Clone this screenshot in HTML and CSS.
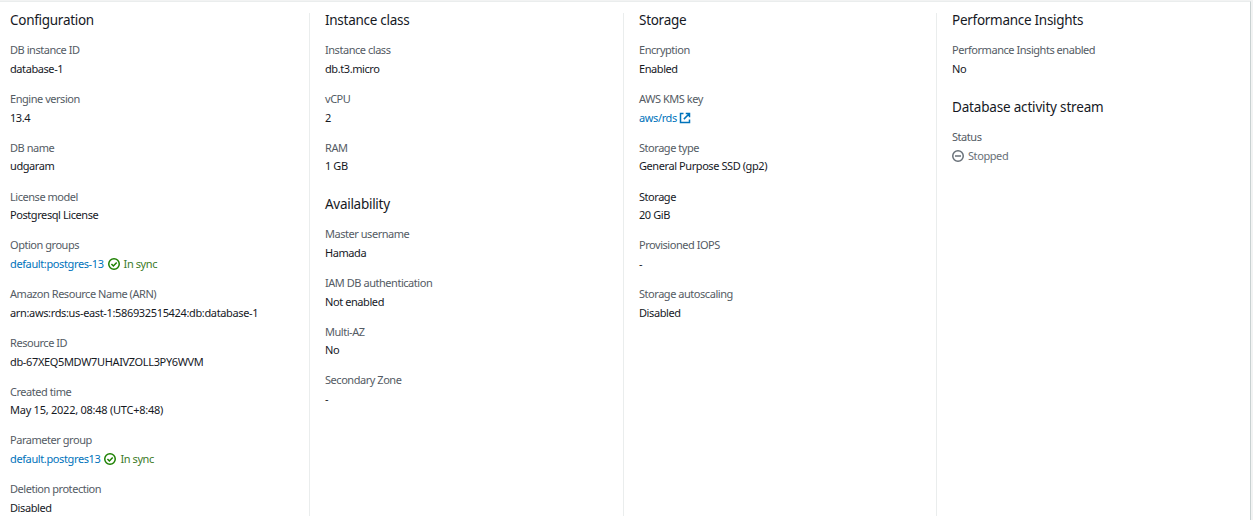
FILE: index.html
```html
<!DOCTYPE html>
<html lang="en">
<head>
<meta charset="utf-8">
<title>Instance configuration</title>
<link rel="stylesheet" href="styles.css">
</head>
<body>
<svg class="sprite" aria-hidden="true">
  <symbol id="check" viewBox="0 0 16 16"><circle cx="8" cy="8" r="7"/><path d="M4.6 8l2.6 2.7 4.4-4.8"/></symbol>
  <symbol id="stop" viewBox="0 0 16 16"><circle cx="8" cy="8" r="7"/><path d="M4 8h8"/></symbol>
  <symbol id="external" viewBox="0 0 16 16"><path d="M6 2H2v12h12v-4M9 2h5v5M14 2L6.5 9.5"/></symbol>
</svg>
<main class="panel">
  <section class="column">
    <h2>Configuration</h2>
    <dl>
      <dt>DB instance ID</dt><dd>database-1</dd>
      <dt>Engine version</dt><dd>13.4</dd>
      <dt>DB name</dt><dd>udgaram</dd>
      <dt>License model</dt><dd>Postgresql License</dd>
      <dt>Option groups</dt><dd><a>default:postgres-13</a><span class="status ok"><svg class="icon"><use href="#check"/></svg>In sync</span></dd>
      <dt>Amazon Resource Name (ARN)</dt><dd class="id">arn:aws:rds:us-east-1:586932515424:db:database-1</dd>
      <dt>Resource ID</dt><dd class="id">db-67XEQ5MDW7UHAIVZOLL3PY6WVM</dd>
      <dt>Created time</dt><dd class="time">May 15, 2022, 08:48 (UTC+8:48)</dd>
      <dt>Parameter group</dt><dd><a>default.postgres13</a><span class="status ok"><svg class="icon"><use href="#check"/></svg>In sync</span></dd>
      <dt>Deletion protection</dt><dd>Disabled</dd>
    </dl>
  </section>
  <section class="column">
    <h2>Instance class</h2>
    <dl>
      <dt>Instance class</dt><dd>db.t3.micro</dd>
      <dt>vCPU</dt><dd>2</dd>
      <dt>RAM</dt><dd>1 GB</dd>
    </dl>
    <h2>Availability</h2>
    <dl>
      <dt>Master username</dt><dd>Hamada</dd>
      <dt>IAM DB authentication</dt><dd>Not enabled</dd>
      <dt>Multi-AZ</dt><dd>No</dd>
      <dt>Secondary Zone</dt><dd>-</dd>
    </dl>
  </section>
  <section class="column">
    <h2>Storage</h2>
    <dl>
      <dt>Encryption</dt><dd>Enabled</dd>
      <dt>AWS KMS key</dt><dd><a>aws/rds<svg class="icon link-icon"><use href="#external"/></svg></a></dd>
      <dt>Storage type</dt><dd>General Purpose SSD (gp2)</dd>
      <dt class="strong">Storage</dt><dd>20 GiB</dd>
      <dt>Provisioned IOPS</dt><dd>-</dd>
      <dt>Storage autoscaling</dt><dd>Disabled</dd>
    </dl>
  </section>
  <section class="column">
    <h2>Performance Insights</h2>
    <dl>
      <dt>Performance Insights enabled</dt><dd>No</dd>
    </dl>
    <h2 class="wide">Database activity stream</h2>
    <dl>
      <dt>Status</dt><dd><span class="status stopped"><svg class="icon"><use href="#stop"/></svg>Stopped</span></dd>
    </dl>
  </section>
</main>
</body>
</html>
```
FILE: styles.css
```css
* { box-sizing: border-box; }
body {
  margin: 0;
  background: #f2f3f3;
  color: #16191f;
  font: 11px/18px "Noto Sans", "Open Sans", sans-serif;
  letter-spacing: -0.42px;
}
.sprite { display: none; }
.panel {
  display: grid;
  grid-template-columns: 309px 314px 313px 1fr;
  width: 1251px;
  height: 520px;
  padding-top: 11px;
  border-top: 1px solid #eaeded;
  border-right: 1px solid #c8d1d1;
  background: #fff;
  margin-top: 1px;
  overflow: hidden;
}
.column {
  height: 503px;
  padding-left: 15px;
  border-left: 1px solid #eaeded;
  white-space: nowrap;
}
.column:first-child { padding-left: 10px; border-left: 0; }
h2 {
  margin: 0;
  padding-bottom: 14.2px;
  font-size: 13.5px;
  line-height: 14px;
  font-weight: 400;
  letter-spacing: -0.28px;
}
dl { margin: 0; }
dt { height: 18.7px; color: #545b64; letter-spacing: -0.46px; }
dt.strong { color: #16191f; }
dd { display: flex; align-items: center; margin: 0; height: 18.1px; margin-bottom: 12px; }
dd.id { letter-spacing: -0.35px; }
dd.time { letter-spacing: -0.25px; }
dl + h2 { padding-top: 9.3px; }
dl + h2.wide { padding-top: 10px; letter-spacing: -0.18px; }
a { display: inline-flex; align-items: center; color: #0073bb; letter-spacing: -0.38px; }
.status { display: inline-flex; align-items: center; gap: 4px; }
a + .status { margin-left: 4px; }
.ok { color: #3c7a28; }
.ok .icon { color: #1d8102; }
.stopped { color: #687078; }
.icon {
  width: 12px;
  height: 12px;
  fill: none;
  stroke: currentColor;
  stroke-width: 2;
}
.link-icon { margin-left: 2px; }
```
